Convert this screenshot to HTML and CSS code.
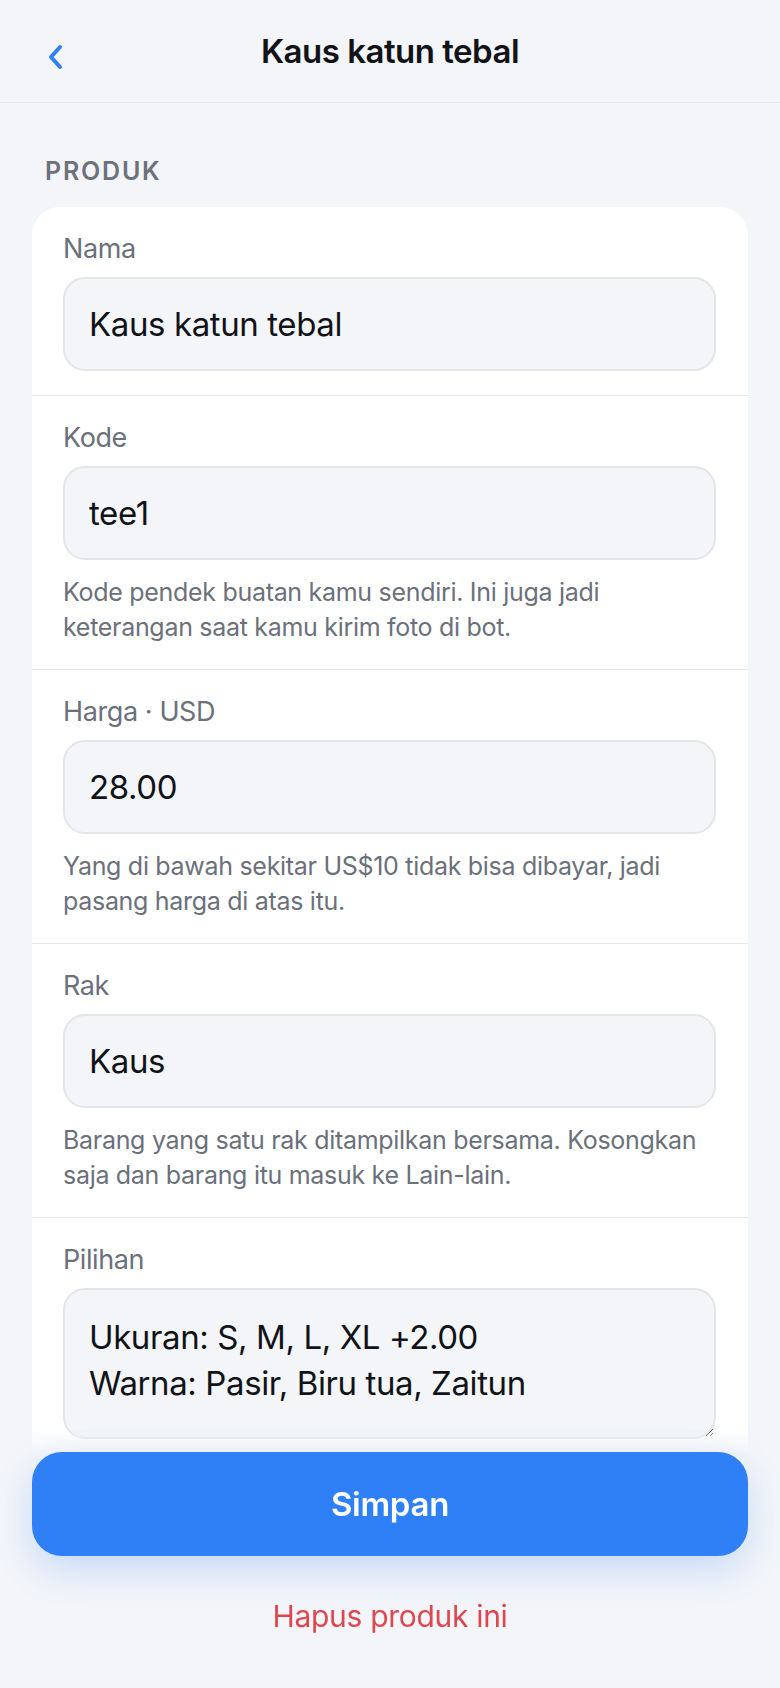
FILE: index.html
```html
<!DOCTYPE html>
<html lang="id">
<head>
<meta charset="utf-8">
<title>Kaus katun tebal</title>
<link rel="stylesheet" href="styles.css">
</head>
<body>
<header class="topbar">
  <button class="back" aria-label="Kembali">
    <svg width="18" height="26" viewBox="0 0 18 26"><path d="M14 3 L5 13 L14 23" fill="none" stroke="#2f7ff7" stroke-width="4" stroke-linecap="round" stroke-linejoin="round"/></svg>
  </button>
  <h1 class="title">Kaus katun tebal</h1>
</header>
<main class="content">
  <div class="group-label">PRODUK</div>
  <section class="card">
    <div class="field">
      <label class="label">Nama</label>
      <input class="input" value="Kaus katun tebal">
    </div>
    <div class="field">
      <label class="label">Kode</label>
      <input class="input" value="tee1">
      <p class="help">Kode pendek buatan kamu sendiri. Ini juga jadi keterangan saat kamu kirim foto di bot.</p>
    </div>
    <div class="field">
      <label class="label">Harga · USD</label>
      <input class="input" value="28.00">
      <p class="help">Yang di bawah sekitar US$10 tidak bisa dibayar, jadi pasang harga di atas itu.</p>
    </div>
    <div class="field">
      <label class="label">Rak</label>
      <input class="input" value="Kaus">
      <p class="help">Barang yang satu rak ditampilkan bersama. Kosongkan saja dan barang itu masuk ke Lain-lain.</p>
    </div>
    <div class="field">
      <label class="label">Pilihan</label>
      <textarea class="input area">Ukuran: S, M, L, XL +2.00
Warna: Pasir, Biru tua, Zaitun</textarea>
    </div>
  </section>
</main>
<footer class="actions">
  <button class="save">Simpan</button>
  <button class="delete">Hapus produk ini</button>
</footer>
</body>
</html>
```
FILE: styles.css
```css
* { box-sizing: border-box; }
html, body { margin: 0; padding: 0; }
body {
  background: #f3f5f9;
  font-family: Inter, "Noto Sans", "Liberation Sans", sans-serif;
  color: #111318;
  height: 1688px;
  overflow: hidden;
}
.topbar {
  height: 103px;
  border-bottom: 1px solid #e3e6eb;
  display: flex;
  align-items: center;
  justify-content: center;
  position: relative;
}
.back {
  position: absolute;
  left: 40px;
  top: 42px;
  background: none;
  border: 0;
  padding: 0;
  width: 30px;
  height: 30px;
  display: flex;
  align-items: center;
  justify-content: center;
}
.title {
  margin: 0;
  font-size: 33px;
  font-weight: 600;
  letter-spacing: -0.5px;
  color: #111318;
}
.content {
  padding: 0 32px;
}
.group-label {
  margin: 48px 0 16px 13px;
  height: 40px;
  line-height: 40px;
  font-size: 25px;
  font-weight: 600;
  letter-spacing: 1.8px;
  color: #6c717c;
}
.card {
  background: #fff;
  border-radius: 28px;
  padding-bottom: 40px;
}
.field {
  padding: 24px 32px 24px 31px;
  display: flex;
  flex-direction: column;
}
.field + .field {
  border-top: 1px solid #e6e8ec;
}
.label {
  font-size: 27px;
  line-height: 36px;
  letter-spacing: -0.4px;
  color: #6b707b;
  margin-bottom: 10px;
}
.input {
  height: 94px;
  width: 100%;
  border: 2px solid #e3e5ea;
  background: #f3f5f8;
  border-radius: 22px;
  padding: 0 24px;
  font-family: inherit;
  font-size: 33px;
  letter-spacing: -0.4px;
  color: #111318;
  outline: none;
}
.area {
  height: 151px;
  padding-top: 24px;
  line-height: 46px;
  resize: vertical;
}
.help {
  margin: 15px 0 0;
  font-size: 25px;
  line-height: 35px;
  letter-spacing: -0.3px;
  color: #6b707b;
}
.actions {
  position: fixed;
  left: 0;
  right: 0;
  bottom: 0;
  height: 258px;
  padding: 22px 32px 0;
  background: linear-gradient(to bottom, rgba(243,245,249,0) 0, #f3f5f9 24px);
  display: flex;
  flex-direction: column;
  align-items: center;
}
.save {
  width: 100%;
  height: 104px;
  border: 0;
  border-radius: 30px;
  background: #2f7ff7;
  color: #fff;
  font-family: inherit;
  font-size: 33px;
  font-weight: 600;
  letter-spacing: -0.3px;
  box-shadow: 0 14px 36px rgba(47,127,247,0.22);
}
.delete {
  margin-top: 38px;
  background: none;
  border: 0;
  font-family: inherit;
  font-size: 30px;
  letter-spacing: -0.3px;
  color: #e0464e;
  padding: 0;
  line-height: 44px;
}
```
